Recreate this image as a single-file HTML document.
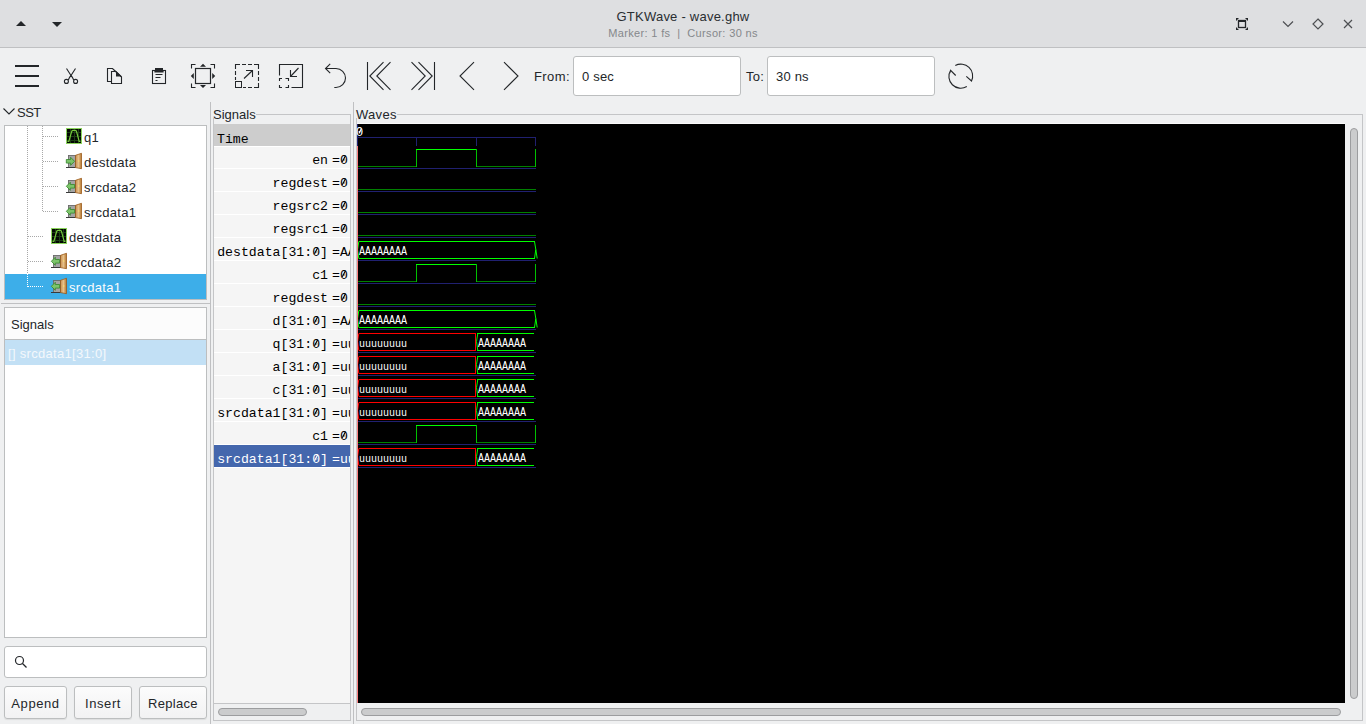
<!DOCTYPE html>
<html><head><meta charset="utf-8"><title>GTKWave - wave.ghw</title>
<style>
*{margin:0;padding:0;box-sizing:border-box}
html,body{width:1366px;height:724px;overflow:hidden;background:#eff0f1;font-family:"Liberation Sans",sans-serif;color:#232629}
.ab{position:absolute}
.t{position:absolute;white-space:pre;line-height:1}
.mono{font-family:"Liberation Mono",monospace}
svg{position:absolute;overflow:visible}
</style></head><body>

<div class="ab" style="left:0;top:0;width:1366px;height:47px;background:#dedfe1"></div>
<div class="ab" style="left:0;top:47px;width:1366px;height:1px;background:#bfc0c2"></div>
<div class="t" style="left:0;width:1366px;text-align:center;top:10px;font-size:13px;letter-spacing:0.23px;color:#2a2e32">GTKWave - wave.ghw</div>
<div class="t" style="left:0;width:1366px;text-align:center;top:28px;font-size:11px;letter-spacing:0.35px;color:#85888b">Marker: 1 fs  |  Cursor: 30 ns</div>
<svg class="ab" style="left:0;top:0" width="1366" height="47"><path d="M16,26 L26,26 L21,21 Z" fill="#232629"/><path d="M52,22 L62,22 L57,27 Z" fill="#232629"/><rect x="1238.5" y="20.5" width="7" height="7" fill="none" stroke="#232629" stroke-width="1.3"/><rect x="1238" y="20" width="8" height="2" fill="#232629"/><path d="M1236,18 h3 l-3,3 z M1248,18 h-3 l3,3 z M1236,30 h3 l-3,-3 z M1248,30 h-3 l3,-3 z" fill="#232629"/><path d="M1283,21.5 L1288,26.5 L1293,21.5" fill="none" stroke="#4d4f52" stroke-width="1.2"/><path d="M1318,19 L1323,24 L1318,29 L1313,24 Z" fill="none" stroke="#4d4f52" stroke-width="1.2"/><path d="M1344,20 L1352,28 M1352,20 L1344,28" fill="none" stroke="#4d4f52" stroke-width="1.2"/></svg>
<svg class="ab" style="left:0;top:0" width="1366" height="100"><path d="M15,66 H39 M15,76 H39 M15,86 H39" fill="none" stroke="#232629" stroke-width="2"/><path d="M66.5,68.5 L71,75.5 L75.5,68.5" fill="none" stroke="#232629" stroke-width="1.1"/><path d="M71,75.5 Q69.5,77 68.3,80 M71,75.5 Q72.5,77 73.7,80" fill="none" stroke="#232629" stroke-width="1.1"/><circle cx="66.4" cy="81.4" r="2" fill="none" stroke="#232629" stroke-width="1.1"/><circle cx="75.6" cy="81.4" r="2" fill="none" stroke="#232629" stroke-width="1.1"/><path d="M111.5,81.5 H107.5 V68.5 H112.5 L116,72" fill="none" stroke="#232629" stroke-width="1.1"/><path d="M111.5,71.5 H116 L121.5,77 V83.5 H111.5 Z" fill="none" stroke="#232629" stroke-width="1.1"/><path d="M112.5,68.5 L121.5,77.5 L121.5,76 L116,71 Z M116,71.5 V76.5 H121.5 Z" fill="#232629"/><rect x="152.5" y="70.5" width="13" height="13" fill="none" stroke="#232629" stroke-width="1.1"/><path d="M155,68 H163 V70 H163.6 V72.6 H154.4 V70 H155 Z" fill="#232629"/><path d="M155.5,74.5 H162.5 M155.5,77.5 H160.5 M155.5,80.5 H157.5" fill="none" stroke="#232629" stroke-width="1.1"/><path d="M191.5,68.5 V64.5 H195.5 M210.5,64.5 H214.5 V68.5 M191.5,83.5 V87.5 H195.5 M210.5,87.5 H214.5 V83.5" fill="none" stroke="#232629" stroke-width="1.1"/><rect x="195.5" y="68.5" width="15" height="15" fill="none" stroke="#232629" stroke-width="1.2"/><path d="M200,66.8 H206 L203,63.8 Z M200,85 H206 L203,88 Z M193.8,73 V79 L190.8,76 Z M212.2,73 V79 L215.2,76 Z" fill="#232629"/><path d="M235.5,69 V64.5 H240 M242,64.5 H246 M248,64.5 H252 M254,64.5 H258.5 V69 M258.5,71 V75 M258.5,77 V81 M258.5,83 V87.5 H254 M252,87.5 H248 M246,87.5 H243 M235.5,71 V75 M235.5,77 V80" fill="none" stroke="#232629" stroke-width="1.1"/><rect x="235.5" y="81.5" width="6" height="6" fill="none" stroke="#232629" stroke-width="1"/><path d="M244,78.5 L252.5,70.5 M246,70.5 H252.5 V77" fill="none" stroke="#232629" stroke-width="1.1"/><path d="M279.5,75.5 V64.5 H302.5 V87.5 H291.5" fill="none" stroke="#232629" stroke-width="1.1"/><path d="M279.5,81 V78.5 H282 M285.5,78.5 H288.5 V81 M279.5,85 V87.5 H282 M285.5,87.5 H288.5 V85" fill="none" stroke="#232629" stroke-width="1.1"/><path d="M298.5,68 L290.5,76.5 M290.5,70 V76.5 H297" fill="none" stroke="#232629" stroke-width="1.1"/><path d="M325.5,68.5 H336 A9.5,9.5 0 0 1 336,87.5 H334.3 M330.2,63.8 L325.5,68.5 L330.2,73.2" fill="none" stroke="#232629" stroke-width="1.1"/><path d="M367.5,62 V90 M383.5,62.2 L369.8,76 L383.5,89.8 M390.5,62.2 L376.8,76 L390.5,89.8" fill="none" stroke="#232629" stroke-width="1.1"/><path d="M434.5,62 V90 M418.5,62.2 L432.2,76 L418.5,89.8 M411.5,62.2 L425.2,76 L411.5,89.8" fill="none" stroke="#232629" stroke-width="1.1"/><path d="M474,62.2 L460,76 L474,89.8" fill="none" stroke="#232629" stroke-width="1.1"/><path d="M504,62.2 L518,76 L504,89.8" fill="none" stroke="#232629" stroke-width="1.1"/><path d="M955.3,65.5 A11.8,11.8 0 0 1 971.5,81 M966.3,76.3 L971.5,81 L972.5,78" fill="none" stroke="#232629" stroke-width="1.1"/><path d="M966.8,86.5 A11.8,11.8 0 0 1 950.6,70.3 M955.7,75.5 L950.6,70.3 L949.8,73" fill="none" stroke="#232629" stroke-width="1.1"/></svg>
<div class="t" style="left:534px;top:70px;font-size:13px;letter-spacing:0.4px;color:#232629">From:</div>
<div class="ab" style="left:573px;top:56px;width:168px;height:40px;background:#fff;border:1px solid #bcbebf;border-radius:3px"></div>
<div class="t" style="left:582px;top:70px;font-size:13px;letter-spacing:0.2px;color:#232629">0 sec</div>
<div class="t" style="left:746px;top:70px;font-size:13px;letter-spacing:0.3px;color:#232629">To:</div>
<div class="ab" style="left:767px;top:56px;width:168px;height:40px;background:#fff;border:1px solid #bcbebf;border-radius:3px"></div>
<div class="t" style="left:776px;top:70px;font-size:13px;letter-spacing:0.2px;color:#232629">30 ns</div>
<svg width="0" height="0" style="position:absolute;left:0;top:0"><defs><linearGradient id="dg" x1="0" x2="1"><stop offset="0" stop-color="#c98f4e"/><stop offset="0.5" stop-color="#e6c08a"/><stop offset="1" stop-color="#b5772f"/></linearGradient></defs></svg>
<svg class="ab" style="left:0;top:100px" width="20" height="20"><path d="M3.5,8.5 L9,14 L14.5,8.5" fill="none" stroke="#232629" stroke-width="1.1"/></svg>
<div class="t" style="left:17px;top:106px;font-size:13px;letter-spacing:-0.5px">SST</div>
<div class="ab" style="left:4px;top:125px;width:203px;height:175px;background:#fff;border:1px solid #bcbebf;overflow:hidden">
<svg style="left:61px;top:2px" width="16" height="16" viewBox="0 0 16 16"><rect x="0.5" y="0.5" width="15" height="15" fill="#030803" stroke="#8ad35a" stroke-width="1"/><path d="M1,4.5 H15 M1,8.5 H15 M1,12.5 H15 M4.5,1 V15 M8.5,1 V15 M12.5,1 V15" stroke="#1c3e14" stroke-width="1" fill="none"/><path d="M1.5,13.5 H2.8 L5.8,3.2 Q6.1,2.4 7,2.4 H9.2 Q10.1,2.4 10.4,3.2 L13.2,13.5 H14.5" stroke="#74c83c" stroke-width="1.2" fill="none"/></svg>
<div class="t" style="left:79px;top:5px;font-size:13px;letter-spacing:0.3px;color:#232629">q1</div>
<svg style="left:61px;top:27px" width="16" height="16" viewBox="0 0 16 16"><rect x="2.5" y="2.5" width="7" height="12" fill="#a4a4a4" stroke="#6a6a6a" stroke-width="0.9"/><path d="M0,14.5 H9.5" stroke="#3a3a3a" stroke-width="1"/><path d="M9.5,2.3 L15.5,0.3 V15.7 L9.5,14.6 Z" fill="url(#dg)" stroke="#9a5a1a" stroke-width="0.8"/><circle cx="12.8" cy="8" r="0.7" fill="#ffe46a"/><path d="M0.3,6.5 H4.6 V4.3 L8.6,8.3 L4.6,12.3 V10.1 H0.3 Z" fill="#7cc46a" stroke="#34852a" stroke-width="0.8"/></svg>
<div class="t" style="left:79px;top:30px;font-size:13px;letter-spacing:0.3px;color:#232629">destdata</div>
<svg style="left:61px;top:52px" width="16" height="16" viewBox="0 0 16 16"><rect x="2.5" y="2.5" width="7" height="12" fill="#a4a4a4" stroke="#6a6a6a" stroke-width="0.9"/><path d="M0,14.5 H9.5" stroke="#3a3a3a" stroke-width="1"/><path d="M9.5,2.3 L15.5,0.3 V15.7 L9.5,14.6 Z" fill="url(#dg)" stroke="#9a5a1a" stroke-width="0.8"/><circle cx="12.8" cy="8" r="0.7" fill="#ffe46a"/><path d="M8.6,6.5 H4.3 V4.3 L0.3,8.3 L4.3,12.3 V10.1 H8.6 Z" fill="#7cc46a" stroke="#34852a" stroke-width="0.8"/></svg>
<div class="t" style="left:79px;top:55px;font-size:13px;letter-spacing:0.3px;color:#232629">srcdata2</div>
<svg style="left:61px;top:77px" width="16" height="16" viewBox="0 0 16 16"><rect x="2.5" y="2.5" width="7" height="12" fill="#a4a4a4" stroke="#6a6a6a" stroke-width="0.9"/><path d="M0,14.5 H9.5" stroke="#3a3a3a" stroke-width="1"/><path d="M9.5,2.3 L15.5,0.3 V15.7 L9.5,14.6 Z" fill="url(#dg)" stroke="#9a5a1a" stroke-width="0.8"/><circle cx="12.8" cy="8" r="0.7" fill="#ffe46a"/><path d="M8.6,6.5 H4.3 V4.3 L0.3,8.3 L4.3,12.3 V10.1 H8.6 Z" fill="#7cc46a" stroke="#34852a" stroke-width="0.8"/></svg>
<div class="t" style="left:79px;top:80px;font-size:13px;letter-spacing:0.3px;color:#232629">srcdata1</div>
<svg style="left:46px;top:102px" width="16" height="16" viewBox="0 0 16 16"><rect x="0.5" y="0.5" width="15" height="15" fill="#030803" stroke="#8ad35a" stroke-width="1"/><path d="M1,4.5 H15 M1,8.5 H15 M1,12.5 H15 M4.5,1 V15 M8.5,1 V15 M12.5,1 V15" stroke="#1c3e14" stroke-width="1" fill="none"/><path d="M1.5,13.5 H2.8 L5.8,3.2 Q6.1,2.4 7,2.4 H9.2 Q10.1,2.4 10.4,3.2 L13.2,13.5 H14.5" stroke="#74c83c" stroke-width="1.2" fill="none"/></svg>
<div class="t" style="left:64px;top:105px;font-size:13px;letter-spacing:0.3px;color:#232629">destdata</div>
<svg style="left:46px;top:127px" width="16" height="16" viewBox="0 0 16 16"><rect x="2.5" y="2.5" width="7" height="12" fill="#a4a4a4" stroke="#6a6a6a" stroke-width="0.9"/><path d="M0,14.5 H9.5" stroke="#3a3a3a" stroke-width="1"/><path d="M9.5,2.3 L15.5,0.3 V15.7 L9.5,14.6 Z" fill="url(#dg)" stroke="#9a5a1a" stroke-width="0.8"/><circle cx="12.8" cy="8" r="0.7" fill="#ffe46a"/><path d="M8.6,6.5 H4.3 V4.3 L0.3,8.3 L4.3,12.3 V10.1 H8.6 Z" fill="#7cc46a" stroke="#34852a" stroke-width="0.8"/></svg>
<div class="t" style="left:64px;top:130px;font-size:13px;letter-spacing:0.3px;color:#232629">srcdata2</div>
<div class="ab" style="left:0;top:148px;width:201px;height:25px;background:#3daee9"></div>
<svg style="left:46px;top:152px" width="16" height="16" viewBox="0 0 16 16"><rect x="2.5" y="2.5" width="7" height="12" fill="#a4a4a4" stroke="#6a6a6a" stroke-width="0.9"/><path d="M0,14.5 H9.5" stroke="#3a3a3a" stroke-width="1"/><path d="M9.5,2.3 L15.5,0.3 V15.7 L9.5,14.6 Z" fill="url(#dg)" stroke="#9a5a1a" stroke-width="0.8"/><circle cx="12.8" cy="8" r="0.7" fill="#ffe46a"/><path d="M8.6,6.5 H4.3 V4.3 L0.3,8.3 L4.3,12.3 V10.1 H8.6 Z" fill="#7cc46a" stroke="#34852a" stroke-width="0.8"/></svg>
<div class="t" style="left:64px;top:155px;font-size:13px;letter-spacing:0.3px;color:#fcfcfc">srcdata1</div>
<div class="ab" style="left:22px;top:0px;width:1px;height:148px;background:repeating-linear-gradient(to bottom,#a8a8a8 0 1px,transparent 1px 2px)"></div>
<div class="ab" style="left:22px;top:148px;width:1px;height:13px;background:repeating-linear-gradient(to bottom,#ffffff 0 1px,transparent 1px 2px)"></div>
<div class="ab" style="left:37px;top:0px;width:1px;height:86px;background:repeating-linear-gradient(to bottom,#a8a8a8 0 1px,transparent 1px 2px)"></div>
<div class="ab" style="left:38px;top:10px;width:15px;height:1px;background:repeating-linear-gradient(to right,#a8a8a8 0 1px,transparent 1px 2px)"></div>
<div class="ab" style="left:38px;top:35px;width:15px;height:1px;background:repeating-linear-gradient(to right,#a8a8a8 0 1px,transparent 1px 2px)"></div>
<div class="ab" style="left:38px;top:60px;width:15px;height:1px;background:repeating-linear-gradient(to right,#a8a8a8 0 1px,transparent 1px 2px)"></div>
<div class="ab" style="left:38px;top:85px;width:15px;height:1px;background:repeating-linear-gradient(to right,#a8a8a8 0 1px,transparent 1px 2px)"></div>
<div class="ab" style="left:23px;top:110px;width:15px;height:1px;background:repeating-linear-gradient(to right,#a8a8a8 0 1px,transparent 1px 2px)"></div>
<div class="ab" style="left:23px;top:135px;width:15px;height:1px;background:repeating-linear-gradient(to right,#a8a8a8 0 1px,transparent 1px 2px)"></div>
<div class="ab" style="left:23px;top:160px;width:15px;height:1px;background:repeating-linear-gradient(to right,#ffffff 0 1px,transparent 1px 2px)"></div>
</div>
<div class="ab" style="left:1px;top:303px;width:209px;height:1px;background:#bfc0c2"></div>
<div class="ab" style="left:4px;top:307px;width:203px;height:331px;background:#fff;border:1px solid #bcbebf"></div>
<div class="ab" style="left:5px;top:308px;width:201px;height:31px;background:#fcfcfc"></div>
<div class="ab" style="left:5px;top:339px;width:201px;height:1px;background:#bcbebf"></div>
<div class="t" style="left:11px;top:318px;font-size:13px">Signals</div>
<div class="ab" style="left:5px;top:340px;width:201px;height:25px;background:#c2e0f5"></div>
<div class="t" style="left:8px;top:347px;font-size:13px;letter-spacing:0.3px;color:#f4f8fc">[] srcdata1[31:0]</div>
<div class="ab" style="left:4px;top:646px;width:203px;height:32px;background:#fff;border:1px solid #bcbebf;border-radius:3px"></div>
<svg class="ab" style="left:0;top:640px" width="40" height="40"><circle cx="19.5" cy="20.5" r="4" fill="none" stroke="#232629" stroke-width="1.2"/><path d="M22.5,23.5 L26.5,27.5" stroke="#232629" stroke-width="1.3"/></svg>
<div class="ab" style="left:4px;top:686px;width:63px;height:33px;background:linear-gradient(#fcfcfc,#f2f2f3);border:1px solid #bcbebf;border-radius:3px;box-shadow:0 1px 1px rgba(0,0,0,0.08)"></div>
<div class="t" style="left:4px;width:63px;text-align:center;top:697px;font-size:13px;letter-spacing:0.6px">Append</div>
<div class="ab" style="left:74px;top:686px;width:58px;height:33px;background:linear-gradient(#fcfcfc,#f2f2f3);border:1px solid #bcbebf;border-radius:3px;box-shadow:0 1px 1px rgba(0,0,0,0.08)"></div>
<div class="t" style="left:74px;width:58px;text-align:center;top:697px;font-size:13px;letter-spacing:0.6px">Insert</div>
<div class="ab" style="left:139px;top:686px;width:68px;height:33px;background:linear-gradient(#fcfcfc,#f2f2f3);border:1px solid #bcbebf;border-radius:3px;box-shadow:0 1px 1px rgba(0,0,0,0.08)"></div>
<div class="t" style="left:139px;width:68px;text-align:center;top:697px;font-size:13px;letter-spacing:0.3px">Replace</div>
<div class="ab" style="left:210px;top:102px;width:1px;height:622px;background:#bfc0c2"></div>
<div class="ab" style="left:353px;top:102px;width:1px;height:622px;background:#bfc0c2"></div>
<div class="ab" style="left:213px;top:114px;width:138px;height:607px;border:1px solid #c4c5c7"></div>
<div class="ab" style="left:212px;top:104px;width:44px;height:14px;background:#eff0f1"></div>
<div class="t" style="left:213px;top:108px;font-size:13px">Signals</div>
<div class="ab" style="left:214px;top:124px;width:136px;height:579px;background:#f5f5f5;overflow:hidden">
<div class="ab" style="left:0;top:0;width:136px;height:22px;background:#cdcdcd"></div>
<div class="t mono" style="left:3px;top:9px;font-size:13.2px;color:#000">Time</div>
<div class="ab" style="left:0;top:22px;width:136px;height:22px;background:#f5f5f5"></div>
<div class="ab" style="left:0;top:44px;width:136px;height:1px;background:#ffffff"></div>
<div class="t mono" style="right:22px;top:30px;font-size:13.2px;color:#000000">en</div>
<div class="t mono" style="left:118px;top:30px;font-size:13.2px;color:#000000">=0</div>
<div class="ab" style="left:0;top:45px;width:136px;height:22px;background:#f5f5f5"></div>
<div class="ab" style="left:0;top:67px;width:136px;height:1px;background:#ffffff"></div>
<div class="t mono" style="right:22px;top:53px;font-size:13.2px;color:#000000">regdest</div>
<div class="t mono" style="left:118px;top:53px;font-size:13.2px;color:#000000">=0</div>
<div class="ab" style="left:0;top:68px;width:136px;height:22px;background:#f5f5f5"></div>
<div class="ab" style="left:0;top:90px;width:136px;height:1px;background:#ffffff"></div>
<div class="t mono" style="right:22px;top:76px;font-size:13.2px;color:#000000">regsrc2</div>
<div class="t mono" style="left:118px;top:76px;font-size:13.2px;color:#000000">=0</div>
<div class="ab" style="left:0;top:91px;width:136px;height:22px;background:#f5f5f5"></div>
<div class="ab" style="left:0;top:113px;width:136px;height:1px;background:#ffffff"></div>
<div class="t mono" style="right:22px;top:99px;font-size:13.2px;color:#000000">regsrc1</div>
<div class="t mono" style="left:118px;top:99px;font-size:13.2px;color:#000000">=0</div>
<div class="ab" style="left:0;top:114px;width:136px;height:22px;background:#f5f5f5"></div>
<div class="ab" style="left:0;top:136px;width:136px;height:1px;background:#ffffff"></div>
<div class="t mono" style="right:22px;top:122px;font-size:13.2px;color:#000000">destdata[31:0]</div>
<div class="t mono" style="left:118px;top:122px;font-size:13.2px;color:#000000">=AAAAAAAA</div>
<div class="ab" style="left:0;top:137px;width:136px;height:22px;background:#f5f5f5"></div>
<div class="ab" style="left:0;top:159px;width:136px;height:1px;background:#ffffff"></div>
<div class="t mono" style="right:22px;top:145px;font-size:13.2px;color:#000000">c1</div>
<div class="t mono" style="left:118px;top:145px;font-size:13.2px;color:#000000">=0</div>
<div class="ab" style="left:0;top:160px;width:136px;height:22px;background:#f5f5f5"></div>
<div class="ab" style="left:0;top:182px;width:136px;height:1px;background:#ffffff"></div>
<div class="t mono" style="right:22px;top:168px;font-size:13.2px;color:#000000">regdest</div>
<div class="t mono" style="left:118px;top:168px;font-size:13.2px;color:#000000">=0</div>
<div class="ab" style="left:0;top:183px;width:136px;height:22px;background:#f5f5f5"></div>
<div class="ab" style="left:0;top:205px;width:136px;height:1px;background:#ffffff"></div>
<div class="t mono" style="right:22px;top:191px;font-size:13.2px;color:#000000">d[31:0]</div>
<div class="t mono" style="left:118px;top:191px;font-size:13.2px;color:#000000">=AAAAAAAA</div>
<div class="ab" style="left:0;top:206px;width:136px;height:22px;background:#f5f5f5"></div>
<div class="ab" style="left:0;top:228px;width:136px;height:1px;background:#ffffff"></div>
<div class="t mono" style="right:22px;top:214px;font-size:13.2px;color:#000000">q[31:0]</div>
<div class="t mono" style="left:118px;top:214px;font-size:13.2px;color:#000000">=uuuuuuuu</div>
<div class="ab" style="left:0;top:229px;width:136px;height:22px;background:#f5f5f5"></div>
<div class="ab" style="left:0;top:251px;width:136px;height:1px;background:#ffffff"></div>
<div class="t mono" style="right:22px;top:237px;font-size:13.2px;color:#000000">a[31:0]</div>
<div class="t mono" style="left:118px;top:237px;font-size:13.2px;color:#000000">=uuuuuuuu</div>
<div class="ab" style="left:0;top:252px;width:136px;height:22px;background:#f5f5f5"></div>
<div class="ab" style="left:0;top:274px;width:136px;height:1px;background:#ffffff"></div>
<div class="t mono" style="right:22px;top:260px;font-size:13.2px;color:#000000">c[31:0]</div>
<div class="t mono" style="left:118px;top:260px;font-size:13.2px;color:#000000">=uuuuuuuu</div>
<div class="ab" style="left:0;top:275px;width:136px;height:22px;background:#f5f5f5"></div>
<div class="ab" style="left:0;top:297px;width:136px;height:1px;background:#ffffff"></div>
<div class="t mono" style="right:22px;top:283px;font-size:13.2px;color:#000000">srcdata1[31:0]</div>
<div class="t mono" style="left:118px;top:283px;font-size:13.2px;color:#000000">=uuuuuuuu</div>
<div class="ab" style="left:0;top:298px;width:136px;height:22px;background:#f5f5f5"></div>
<div class="ab" style="left:0;top:320px;width:136px;height:1px;background:#ffffff"></div>
<div class="t mono" style="right:22px;top:306px;font-size:13.2px;color:#000000">c1</div>
<div class="t mono" style="left:118px;top:306px;font-size:13.2px;color:#000000">=0</div>
<div class="ab" style="left:0;top:321px;width:136px;height:22px;background:#4467ad"></div>
<div class="ab" style="left:0;top:343px;width:136px;height:1px;background:#ffffff"></div>
<div class="t mono" style="right:22px;top:329px;font-size:13.2px;color:#ffffff">srcdata1[31:0]</div>
<div class="t mono" style="left:118px;top:329px;font-size:13.2px;color:#ffffff">=uuuuuuuu</div>
<div class="ab" style="left:0;top:22px;width:136px;height:1px;background:#fff"></div>
</div>
<svg class="ab" style="left:0;top:0" width="1366" height="724"><path d="M343.7,159.0 L344.1,160.4" stroke="#f5f5f5" stroke-width="1.4"/><path d="M342.3,161.8 L345.5,155.8" stroke="#000000" stroke-width="1.2"/><path d="M343.7,182.0 L344.1,183.4" stroke="#f5f5f5" stroke-width="1.4"/><path d="M342.3,184.8 L345.5,178.8" stroke="#000000" stroke-width="1.2"/><path d="M343.7,205.0 L344.1,206.4" stroke="#f5f5f5" stroke-width="1.4"/><path d="M342.3,207.8 L345.5,201.8" stroke="#000000" stroke-width="1.2"/><path d="M343.7,228.0 L344.1,229.4" stroke="#f5f5f5" stroke-width="1.4"/><path d="M342.3,230.8 L345.5,224.8" stroke="#000000" stroke-width="1.2"/><path d="M315.9,251.0 L316.3,252.4" stroke="#f5f5f5" stroke-width="1.4"/><path d="M314.5,253.8 L317.7,247.8" stroke="#000000" stroke-width="1.2"/><path d="M343.7,274.0 L344.1,275.4" stroke="#f5f5f5" stroke-width="1.4"/><path d="M342.3,276.8 L345.5,270.8" stroke="#000000" stroke-width="1.2"/><path d="M343.7,297.0 L344.1,298.4" stroke="#f5f5f5" stroke-width="1.4"/><path d="M342.3,299.8 L345.5,293.8" stroke="#000000" stroke-width="1.2"/><path d="M315.9,320.0 L316.3,321.4" stroke="#f5f5f5" stroke-width="1.4"/><path d="M314.5,322.8 L317.7,316.8" stroke="#000000" stroke-width="1.2"/><path d="M315.9,343.0 L316.3,344.4" stroke="#f5f5f5" stroke-width="1.4"/><path d="M314.5,345.8 L317.7,339.8" stroke="#000000" stroke-width="1.2"/><path d="M315.9,366.0 L316.3,367.4" stroke="#f5f5f5" stroke-width="1.4"/><path d="M314.5,368.8 L317.7,362.8" stroke="#000000" stroke-width="1.2"/><path d="M315.9,389.0 L316.3,390.4" stroke="#f5f5f5" stroke-width="1.4"/><path d="M314.5,391.8 L317.7,385.8" stroke="#000000" stroke-width="1.2"/><path d="M315.9,412.0 L316.3,413.4" stroke="#f5f5f5" stroke-width="1.4"/><path d="M314.5,414.8 L317.7,408.8" stroke="#000000" stroke-width="1.2"/><path d="M343.7,435.0 L344.1,436.4" stroke="#f5f5f5" stroke-width="1.4"/><path d="M342.3,437.8 L345.5,431.8" stroke="#000000" stroke-width="1.2"/><path d="M315.9,458.0 L316.3,459.4" stroke="#4467ad" stroke-width="1.4"/><path d="M314.5,460.8 L317.7,454.8" stroke="#ffffff" stroke-width="1.2"/></svg>
<div class="ab" style="left:214px;top:703px;width:136px;height:1px;background:#c4c5c7"></div>
<div class="ab" style="left:218px;top:708px;width:89px;height:8px;background:#cbcccd;border:1px solid #9c9d9f;border-radius:4px"></div>
<div class="ab" style="left:356px;top:114px;width:1007px;height:607px;border:1px solid #c4c5c7"></div>
<div class="ab" style="left:355px;top:104px;width:42px;height:14px;background:#eff0f1"></div>
<div class="t" style="left:356px;top:108px;font-size:13px;letter-spacing:0.3px">Waves</div>
<div class="ab" style="left:357px;top:123px;width:988px;height:1px;background:#fafafa"></div>
<div class="ab" style="left:357px;top:124px;width:988px;height:579px;background:#000"></div>
<div class="ab" style="left:1350px;top:128px;width:8px;height:571px;background:#cbcccd;border:1px solid #9c9d9f;border-radius:4px"></div>
<div class="ab" style="left:361px;top:708px;width:980px;height:8px;background:#cbcccd;border:1px solid #9c9d9f;border-radius:4px"></div>
<svg class="ab" style="left:0;top:0;shape-rendering:crispEdges" width="1366" height="724"><path d="M357,137.5 H536" stroke="#202070" stroke-width="1"/><path d="M357.5,124 V146" stroke="#202070" stroke-width="1"/><path d="M416.5,137 V146" stroke="#202070" stroke-width="1"/><path d="M476.5,137 V146" stroke="#202070" stroke-width="1"/><path d="M535.5,137 V146" stroke="#202070" stroke-width="1"/><path d="M358,168.5 H536" stroke="#202070" stroke-width="1"/><path d="M358,166.5 H416" stroke="#008000" stroke-width="1"/><path d="M416.5,149 V167" stroke="#00c000" stroke-width="1"/><path d="M416,149.5 H477" stroke="#00ff00" stroke-width="1"/><path d="M476.5,149 V167" stroke="#00c000" stroke-width="1"/><path d="M477,166.5 H536" stroke="#008000" stroke-width="1"/><path d="M535.5,149 V167" stroke="#00c000" stroke-width="1"/><path d="M358,191.5 H536" stroke="#202070" stroke-width="1"/><path d="M358,189.5 H536" stroke="#008000" stroke-width="1"/><path d="M358,214.5 H536" stroke="#202070" stroke-width="1"/><path d="M358,212.5 H536" stroke="#008000" stroke-width="1"/><path d="M358,237.5 H536" stroke="#202070" stroke-width="1"/><path d="M358,235.5 H536" stroke="#008000" stroke-width="1"/><path d="M358,260.5 H536" stroke="#202070" stroke-width="1"/><path d="M359,241.5 H535" stroke="#00ff00" stroke-width="1"/><path d="M359,258.5 H535" stroke="#00ff00" stroke-width="1"/><path shape-rendering="auto" d="M358.8,241.5 L357.6,249.5 L358.8,258.5" stroke="#00ff00" stroke-width="1" fill="none"/><path shape-rendering="auto" d="M534.5,241.5 L535.8,249.5 L534.5,258.5 M535.8,249.5 L537.2,258.5" stroke="#00ff00" stroke-width="1" fill="none"/><text x="359" y="255" fill="#fff" font-family="Liberation Mono" font-size="11.9" textLength="48" lengthAdjust="spacingAndGlyphs">AAAAAAAA</text><path d="M358,283.5 H536" stroke="#202070" stroke-width="1"/><path d="M358,281.5 H416" stroke="#008000" stroke-width="1"/><path d="M416.5,264 V282" stroke="#00c000" stroke-width="1"/><path d="M416,264.5 H477" stroke="#00ff00" stroke-width="1"/><path d="M476.5,264 V282" stroke="#00c000" stroke-width="1"/><path d="M477,281.5 H536" stroke="#008000" stroke-width="1"/><path d="M535.5,264 V282" stroke="#00c000" stroke-width="1"/><path d="M358,306.5 H536" stroke="#202070" stroke-width="1"/><path d="M358,304.5 H536" stroke="#008000" stroke-width="1"/><path d="M358,329.5 H536" stroke="#202070" stroke-width="1"/><path d="M359,310.5 H535" stroke="#00ff00" stroke-width="1"/><path d="M359,327.5 H535" stroke="#00ff00" stroke-width="1"/><path shape-rendering="auto" d="M358.8,310.5 L357.6,318.5 L358.8,327.5" stroke="#00ff00" stroke-width="1" fill="none"/><path shape-rendering="auto" d="M534.5,310.5 L535.8,318.5 L534.5,327.5 M535.8,318.5 L537.2,327.5" stroke="#00ff00" stroke-width="1" fill="none"/><text x="359" y="324" fill="#fff" font-family="Liberation Mono" font-size="11.9" textLength="48" lengthAdjust="spacingAndGlyphs">AAAAAAAA</text><path d="M358,352.5 H536" stroke="#202070" stroke-width="1"/><path d="M359,333.5 H476" stroke="#ff0000" stroke-width="1"/><path d="M359,350.5 H476" stroke="#ff0000" stroke-width="1"/><path shape-rendering="auto" d="M358.8,333.5 L357.6,341.5 L358.8,350.5" stroke="#ff0000" stroke-width="1" fill="none"/><path d="M475.5,333 V351" stroke="#ff0000" stroke-width="1"/><path shape-rendering="auto" d="M477.8,333.5 L476.5,341.5 L477.8,350.5" stroke="#00ff00" stroke-width="1" fill="none"/><path d="M477,333.5 H534" stroke="#00ff00" stroke-width="1"/><path d="M477,350.5 H534" stroke="#00ff00" stroke-width="1"/><text x="359" y="347" fill="#fff" font-family="Liberation Mono" font-size="11.6" textLength="48" lengthAdjust="spacingAndGlyphs">uuuuuuuu</text><text x="478" y="347" fill="#fff" font-family="Liberation Mono" font-size="11.9" textLength="48" lengthAdjust="spacingAndGlyphs">AAAAAAAA</text><path d="M358,375.5 H536" stroke="#202070" stroke-width="1"/><path d="M359,356.5 H476" stroke="#ff0000" stroke-width="1"/><path d="M359,373.5 H476" stroke="#ff0000" stroke-width="1"/><path shape-rendering="auto" d="M358.8,356.5 L357.6,364.5 L358.8,373.5" stroke="#ff0000" stroke-width="1" fill="none"/><path d="M475.5,356 V374" stroke="#ff0000" stroke-width="1"/><path shape-rendering="auto" d="M477.8,356.5 L476.5,364.5 L477.8,373.5" stroke="#00ff00" stroke-width="1" fill="none"/><path d="M477,356.5 H534" stroke="#00ff00" stroke-width="1"/><path d="M477,373.5 H534" stroke="#00ff00" stroke-width="1"/><text x="359" y="370" fill="#fff" font-family="Liberation Mono" font-size="11.6" textLength="48" lengthAdjust="spacingAndGlyphs">uuuuuuuu</text><text x="478" y="370" fill="#fff" font-family="Liberation Mono" font-size="11.9" textLength="48" lengthAdjust="spacingAndGlyphs">AAAAAAAA</text><path d="M358,398.5 H536" stroke="#202070" stroke-width="1"/><path d="M359,379.5 H476" stroke="#ff0000" stroke-width="1"/><path d="M359,396.5 H476" stroke="#ff0000" stroke-width="1"/><path shape-rendering="auto" d="M358.8,379.5 L357.6,387.5 L358.8,396.5" stroke="#ff0000" stroke-width="1" fill="none"/><path d="M475.5,379 V397" stroke="#ff0000" stroke-width="1"/><path shape-rendering="auto" d="M477.8,379.5 L476.5,387.5 L477.8,396.5" stroke="#00ff00" stroke-width="1" fill="none"/><path d="M477,379.5 H534" stroke="#00ff00" stroke-width="1"/><path d="M477,396.5 H534" stroke="#00ff00" stroke-width="1"/><text x="359" y="393" fill="#fff" font-family="Liberation Mono" font-size="11.6" textLength="48" lengthAdjust="spacingAndGlyphs">uuuuuuuu</text><text x="478" y="393" fill="#fff" font-family="Liberation Mono" font-size="11.9" textLength="48" lengthAdjust="spacingAndGlyphs">AAAAAAAA</text><path d="M358,421.5 H536" stroke="#202070" stroke-width="1"/><path d="M359,402.5 H476" stroke="#ff0000" stroke-width="1"/><path d="M359,419.5 H476" stroke="#ff0000" stroke-width="1"/><path shape-rendering="auto" d="M358.8,402.5 L357.6,410.5 L358.8,419.5" stroke="#ff0000" stroke-width="1" fill="none"/><path d="M475.5,402 V420" stroke="#ff0000" stroke-width="1"/><path shape-rendering="auto" d="M477.8,402.5 L476.5,410.5 L477.8,419.5" stroke="#00ff00" stroke-width="1" fill="none"/><path d="M477,402.5 H534" stroke="#00ff00" stroke-width="1"/><path d="M477,419.5 H534" stroke="#00ff00" stroke-width="1"/><text x="359" y="416" fill="#fff" font-family="Liberation Mono" font-size="11.6" textLength="48" lengthAdjust="spacingAndGlyphs">uuuuuuuu</text><text x="478" y="416" fill="#fff" font-family="Liberation Mono" font-size="11.9" textLength="48" lengthAdjust="spacingAndGlyphs">AAAAAAAA</text><path d="M358,444.5 H536" stroke="#202070" stroke-width="1"/><path d="M358,442.5 H416" stroke="#008000" stroke-width="1"/><path d="M416.5,425 V443" stroke="#00c000" stroke-width="1"/><path d="M416,425.5 H477" stroke="#00ff00" stroke-width="1"/><path d="M476.5,425 V443" stroke="#00c000" stroke-width="1"/><path d="M477,442.5 H536" stroke="#008000" stroke-width="1"/><path d="M535.5,425 V443" stroke="#00c000" stroke-width="1"/><path d="M358,467.5 H536" stroke="#202070" stroke-width="1"/><path d="M359,448.5 H476" stroke="#ff0000" stroke-width="1"/><path d="M359,465.5 H476" stroke="#ff0000" stroke-width="1"/><path shape-rendering="auto" d="M358.8,448.5 L357.6,456.5 L358.8,465.5" stroke="#ff0000" stroke-width="1" fill="none"/><path d="M475.5,448 V466" stroke="#ff0000" stroke-width="1"/><path shape-rendering="auto" d="M477.8,448.5 L476.5,456.5 L477.8,465.5" stroke="#00ff00" stroke-width="1" fill="none"/><path d="M477,448.5 H534" stroke="#00ff00" stroke-width="1"/><path d="M477,465.5 H534" stroke="#00ff00" stroke-width="1"/><text x="359" y="462" fill="#fff" font-family="Liberation Mono" font-size="11.6" textLength="48" lengthAdjust="spacingAndGlyphs">uuuuuuuu</text><text x="478" y="462" fill="#fff" font-family="Liberation Mono" font-size="11.9" textLength="48" lengthAdjust="spacingAndGlyphs">AAAAAAAA</text><path d="M357.5,146 V703" stroke="#ff8080" stroke-width="1"/><text x="355.8" y="135.5" fill="#fff" font-family="Liberation Mono" font-size="12.5">0</text><path shape-rendering="auto" d="M359,133.6 L361.4,128.4" stroke="#fff" stroke-width="1.1"/></svg>
</body></html>
